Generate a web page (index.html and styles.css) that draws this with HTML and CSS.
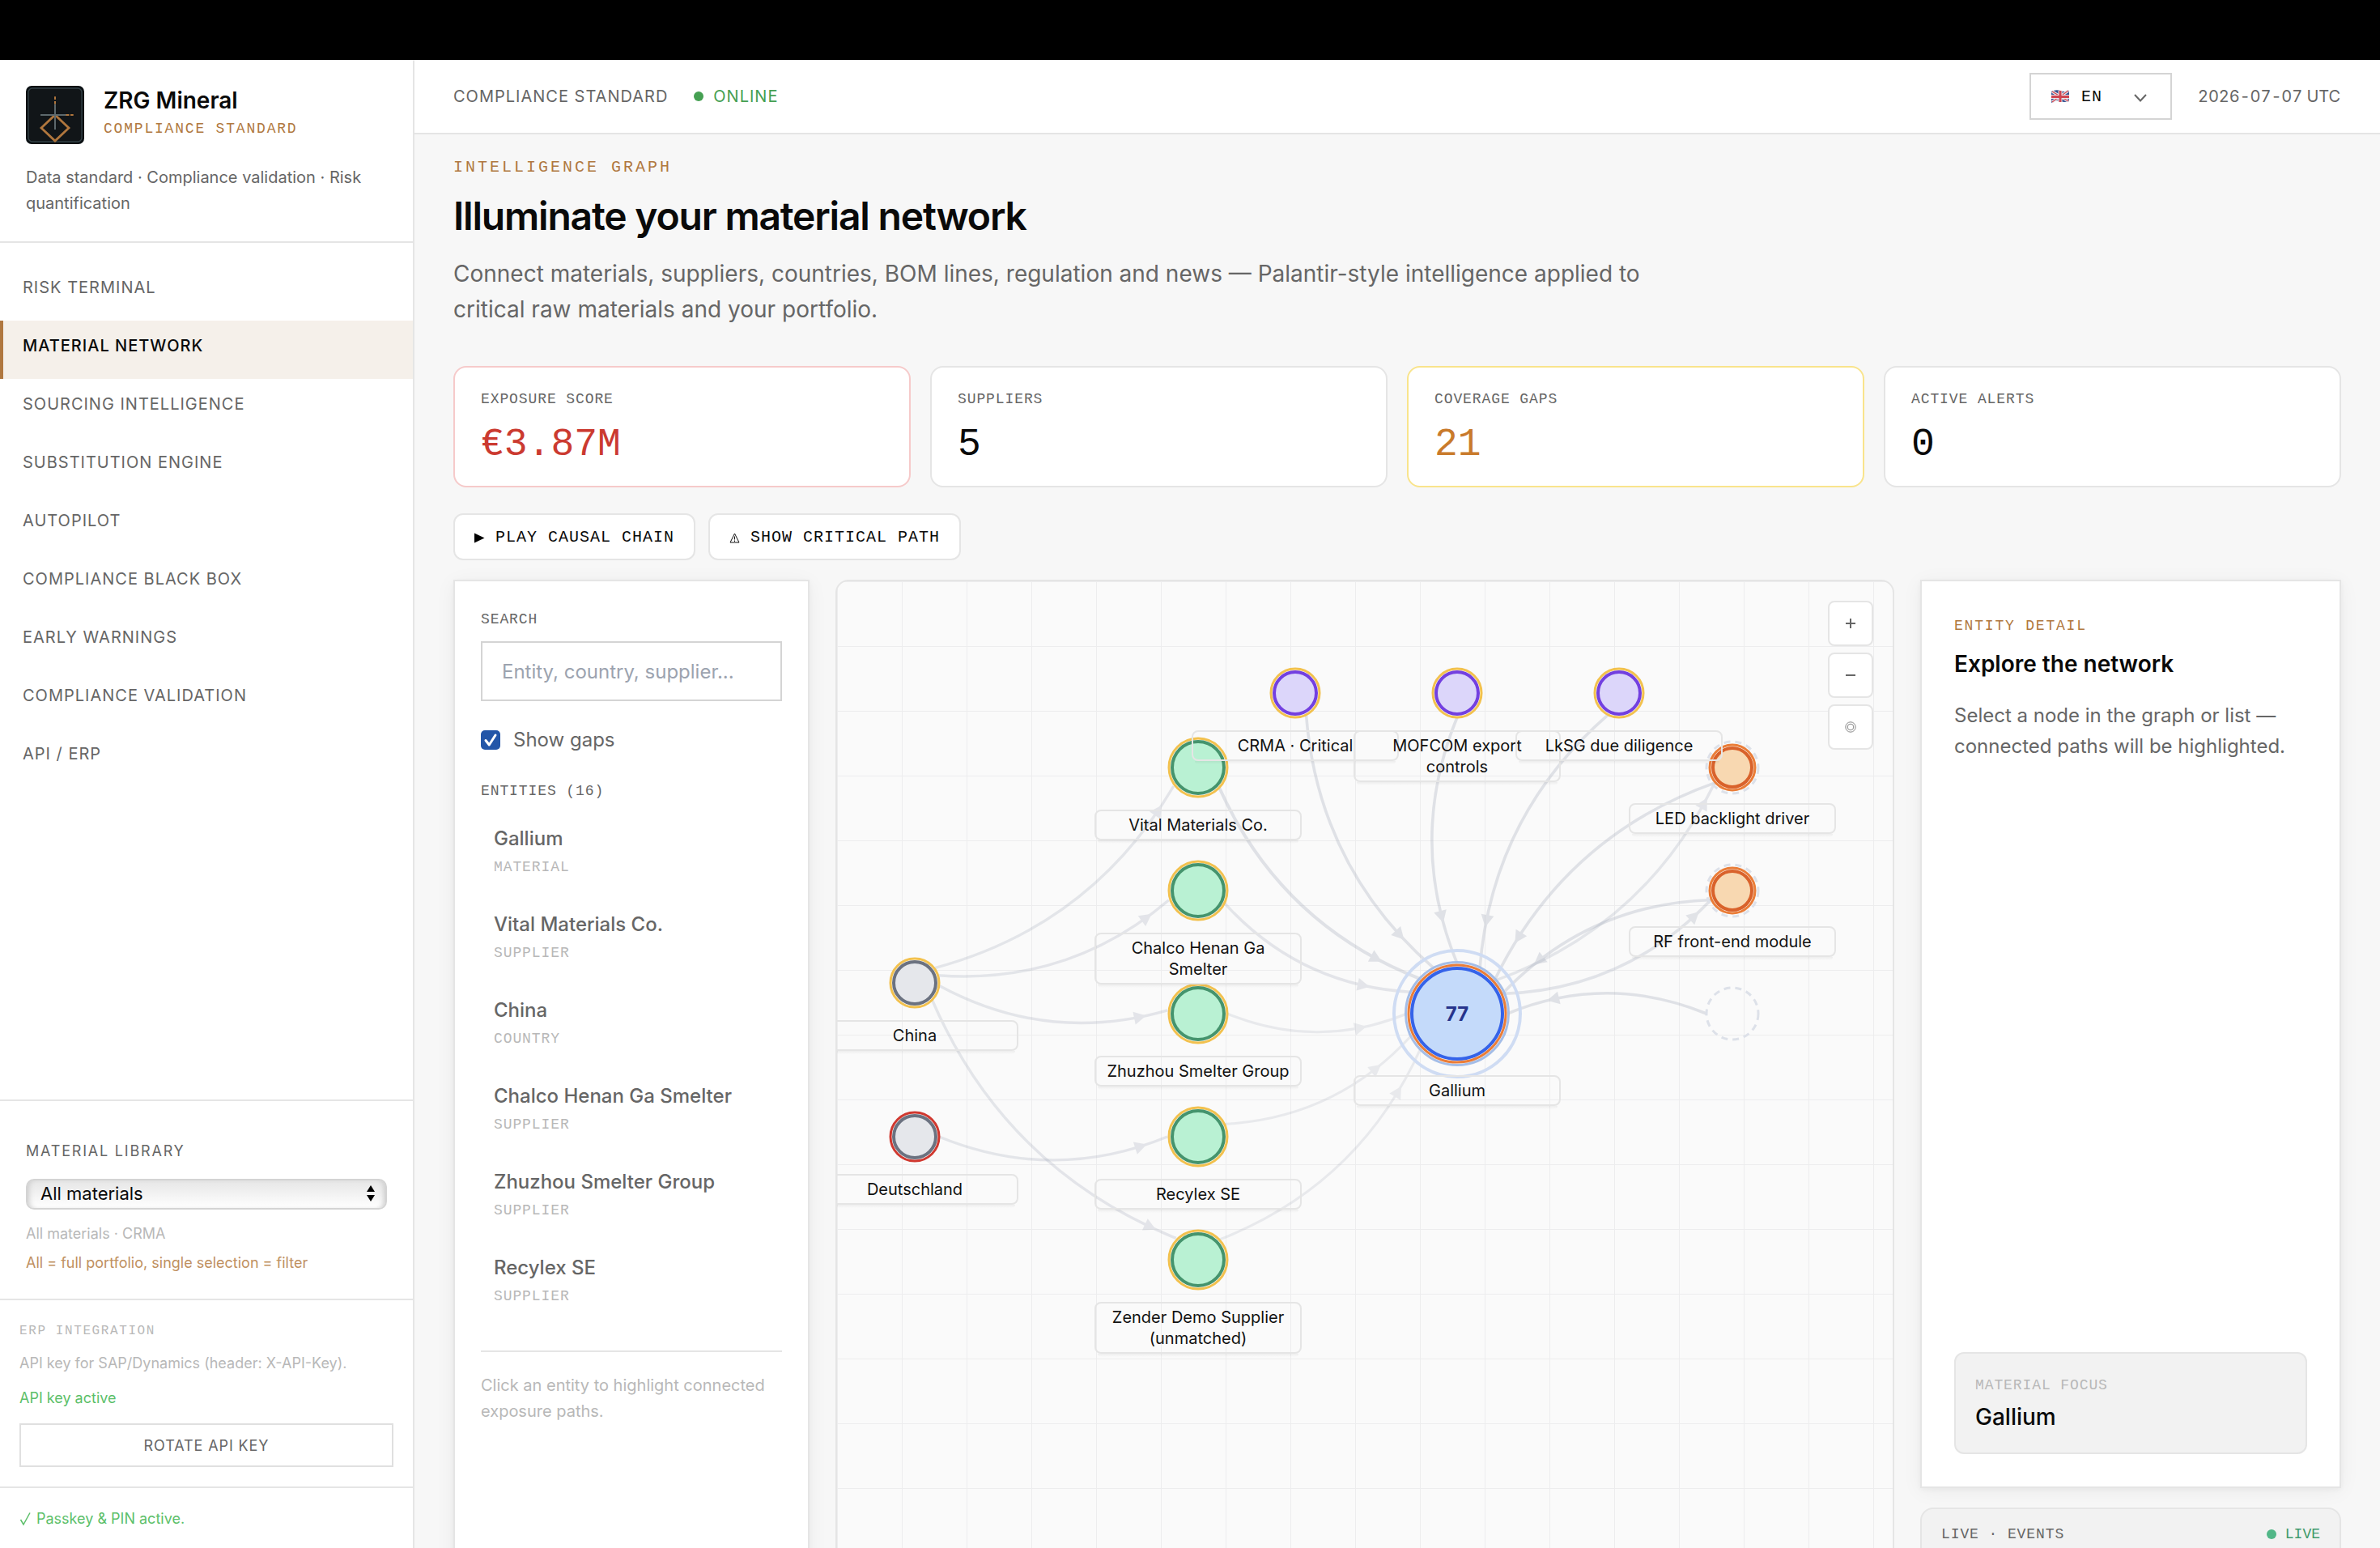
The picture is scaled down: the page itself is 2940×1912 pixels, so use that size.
FILE: index.html
```html
<!DOCTYPE html>
<html lang="en">

<head>
    <meta charset="UTF-8">
    <meta name="viewport" content="width=device-width, initial-scale=1.0">
    <title>ZRG Mineral</title>
    <link rel="stylesheet" href="styles.css">
</head>

<body>
    <div class="top_strip"></div>
    <div class="app">

        <!-- sidebar -->
        <aside class="sidebar">
            <div class="brand">
                <div class="brand_row">
                    <svg class="logo" viewBox="0 0 72 72">
                        <rect width="72" height="72" rx="7" fill="#0b1013" />
                        <rect x="3" y="3" width="66" height="66" rx="5" fill="#111518" stroke="#334045" stroke-width="1.4" />
                        <path d="M36 36L53 52L36 68L19 52Z" fill="none" stroke="#b0763d" stroke-width="2.8" />
                        <path d="M36 22.5V54M18 36H50" stroke="#5d686c" stroke-width="2" />
                        <path d="M36 13.3V17M36 19V22.5M49.5 36H53.5M55 36H58.7" stroke="#b0763d" stroke-width="2" />
                    </svg>
                    <div>
                        <div class="brand_name">ZRG Mineral</div>
                        <div class="brand_sub">COMPLIANCE STANDARD</div>
                    </div>
                </div>
                <p class="brand_text">Data standard · Compliance validation · Risk quantification</p>
            </div>

            <nav class="nav">
                <a>RISK TERMINAL</a>
                <a class="active">MATERIAL NETWORK</a>
                <a>SOURCING INTELLIGENCE</a>
                <a>SUBSTITUTION ENGINE</a>
                <a>AUTOPILOT</a>
                <a>COMPLIANCE BLACK BOX</a>
                <a>EARLY WARNINGS</a>
                <a>COMPLIANCE VALIDATION</a>
                <a>API / ERP</a>
            </nav>

            <div class="library">
                <div class="library_title">MATERIAL LIBRARY</div>
                <div class="library_select">
                    <span>All materials</span>
                    <svg width="10" height="20" viewBox="0 0 10 20"><path d="M5 0L10 8H0ZM5 20L0 12H10Z" /></svg>
                </div>
                <div class="small">All materials · CRMA</div>
                <div class="small hint">All = full portfolio, single selection = filter</div>
            </div>

            <div class="erp">
                <div class="erp_title">ERP INTEGRATION</div>
                <div class="small">API key for SAP/Dynamics (header: X-API-Key).</div>
                <div class="small ok">API key active</div>
                <div class="rotate">ROTATE API KEY</div>
            </div>

            <div class="passkey">
                <svg width="15" height="18" viewBox="0 0 15 18"><path d="M1.5 10L5 16L13 1.5" /></svg>
                <span class="small">Passkey &amp; PIN active.</span>
            </div>
        </aside>

        <main class="main">
            <header class="header">
                <span>COMPLIANCE STANDARD</span>
                <span class="online"><i></i>ONLINE</span>
                <div class="lang">
                    <svg class="flag" viewBox="0 0 22 16">
                        <path d="M0 2Q6 -1 11 1T22 1V14Q16 16 11 14T0 16Z" fill="#35518f" />
                        <path d="M1 2L21 14M21 1L1 15" stroke="#e9e6ea" stroke-width="3.4" />
                        <path d="M1 2L21 14M21 1L1 15" stroke="#cf4450" stroke-width="1.2" />
                        <path d="M11 1V15M0 8.5H22" stroke="#e9e6ea" stroke-width="5" />
                        <path d="M11 1V15M0 8.5H22" stroke="#cf4450" stroke-width="3" />
                    </svg>
                    <span>EN</span>
                    <svg class="chevron" viewBox="0 0 16 10"><path d="M1 1L8 8.5L15 1" /></svg>
                </div>
                <span class="date">2026-07-07 UTC</span>
            </header>

            <div class="content">
                <div class="eyebrow">INTELLIGENCE GRAPH</div>
                <h1>Illuminate your material network</h1>
                <p class="lead">Connect materials, suppliers, countries, BOM lines, regulation and news — Palantir-style intelligence applied to critical raw materials and your portfolio.</p>

                <div class="cards">
                    <div class="card card_red">
                        <div class="label">EXPOSURE SCORE</div>
                        <div class="value">€3.87M</div>
                    </div>
                    <div class="card">
                        <div class="label">SUPPLIERS</div>
                        <div class="value">5</div>
                    </div>
                    <div class="card card_yellow">
                        <div class="label">COVERAGE GAPS</div>
                        <div class="value">21</div>
                    </div>
                    <div class="card">
                        <div class="label">ACTIVE ALERTS</div>
                        <div class="value">0</div>
                    </div>
                </div>

                <div class="actions">
                    <div class="action">
                        <svg width="13" height="13" viewBox="0 0 13 13"><path d="M0 0.5L12.5 6.5L0 12.5Z" /></svg>
                        <span>PLAY CAUSAL CHAIN</span>
                    </div>
                    <div class="action">
                        <svg width="13" height="13" viewBox="0 0 13 13"><path d="M6.5 1L12 12H1ZM6.5 4.5V8.5M6.5 9.5V11" fill="none" stroke="#111" /></svg>
                        <span>SHOW CRITICAL PATH</span>
                    </div>
                </div>

                <div class="workspace">
                    <!-- entity list -->
                    <section class="panel search_panel">
                        <div class="label">SEARCH</div>
                        <div class="search_input">Entity, country, supplier...</div>
                        <div class="check_row">
                            <svg width="24" height="24" viewBox="0 0 24 24">
                                <rect width="24" height="24" rx="5" fill="#2356a8" />
                                <path d="M6 12.5L10.3 18L18 6" fill="none" stroke="#fff" stroke-width="3" stroke-linecap="round" stroke-linejoin="round" />
                            </svg>
                            <span>Show gaps</span>
                        </div>
                        <div class="label">ENTITIES (16)</div>
                        <ul class="entities">
                            <li><b>Gallium</b><span>MATERIAL</span></li>
                            <li><b>Vital Materials Co.</b><span>SUPPLIER</span></li>
                            <li><b>China</b><span>COUNTRY</span></li>
                            <li><b>Chalco Henan Ga Smelter</b><span>SUPPLIER</span></li>
                            <li><b>Zhuzhou Smelter Group</b><span>SUPPLIER</span></li>
                            <li><b>Recylex SE</b><span>SUPPLIER</span></li>
                        </ul>
                        <p class="panel_note">Click an entity to highlight connected exposure paths.</p>
                    </section>

                    <!-- graph, filled in by graph.js -->
                    <section class="graph">
                        <svg class="graph_svg" id="graph_svg" width="1304" height="1240"></svg>
                        <div id="graph_labels"></div>
                        <div class="zoom_tools">
                            <div><svg width="14" height="14" viewBox="0 0 14 14"><path d="M1 7H13M7 1V13" /></svg></div>
                            <div><svg width="14" height="14" viewBox="0 0 14 14"><path d="M1 7H13" /></svg></div>
                            <div class="reset"><svg width="14" height="14" viewBox="0 0 14 14"><circle cx="7" cy="7" r="6.2" /><circle cx="7" cy="7" r="3.8" /></svg></div>
                        </div>
                    </section>

                    <!-- detail -->
                    <div class="side">
                        <section class="panel detail">
                            <div class="detail_eyebrow">ENTITY DETAIL</div>
                            <h3>Explore the network</h3>
                            <p>Select a node in the graph or list — connected paths will be highlighted.</p>
                            <div class="focus">
                                <div class="label">MATERIAL FOCUS</div>
                                <div class="focus_name">Gallium</div>
                            </div>
                        </section>
                        <section class="live">
                            <span class="label">LIVE · EVENTS</span>
                            <span class="live_state"><i></i>LIVE</span>
                        </section>
                    </div>
                </div>
            </div>
        </main>
    </div>

    <script src="graph.js"></script>
</body>

</html>
```
FILE: styles.css
```css
* {
    margin: 0;
    padding: 0;
    box-sizing: border-box;
}

body {
    height: 1912px;
    overflow: hidden;
    font-family: Inter, "Liberation Sans", sans-serif;
    color: #0a0a0a;
    background-color: #f7f7f7;
}

.top_strip {
    height: 74px;
    background-color: #000;
}

.app {
    display: flex;
    height: 1838px;
    overflow: hidden;
}

/* sidebar */
.sidebar {
    display: flex;
    flex-direction: column;
    flex: none;
    width: 512px;
    background-color: #fff;
    border-right: 2px solid #e5e5e5;
}

.brand {
    height: 226px;
    padding: 32px 32px 0;
    border-bottom: 2px solid #e5e5e5;
}

.brand_row {
    display: flex;
    gap: 24px;
    height: 72px;
}

.logo {
    width: 72px;
    height: 72px;
}

.brand_name {
    font-size: 28px;
    font-weight: 600;
    line-height: 36px;
}

.brand_sub {
    margin-top: 3px;
    font-family: "Liberation Mono", monospace;
    font-size: 18px;
    line-height: 28px;
    letter-spacing: 1.8px;
    color: #b07840;
}

.brand_text {
    margin-top: 25px;
    font-size: 20px;
    line-height: 32px;
    color: #666;
}

.nav {
    flex: 1;
    padding-top: 24px;
}

.nav a {
    display: block;
    height: 72px;
    padding-left: 28px;
    font-size: 20px;
    line-height: 62px;
    letter-spacing: 1px;
    color: #666;
}

.nav .active {
    padding-left: 24px;
    font-weight: 500;
    color: #0a0a0a;
    background-color: #f5f0ea;
    border-left: 4px solid #b07840;
}

.library {
    height: 246px;
    padding: 48px 32px 0;
    border-top: 2px solid #e5e5e5;
}

.library_title {
    font-size: 18px;
    line-height: 28px;
    letter-spacing: 1.8px;
    color: #666;
}

.library_select {
    display: flex;
    align-items: center;
    justify-content: space-between;
    height: 38px;
    margin: 20px 0 16px;
    padding: 0 13px 2px 16px;
    font-size: 22px;
    border: 2px solid #d4d4d4;
    border-radius: 10px;
    background: linear-gradient(#e6e6e6, #fff);
    box-shadow: inset 6px 0 6px -4px #ccc, inset -6px 0 6px -4px #ccc;
}

.small {
    font-size: 18px;
    line-height: 28px;
    color: #b8b8b8;
}

.hint {
    margin-top: 8px;
    color: #c0905f;
}

.erp {
    height: 232px;
    padding: 26px 24px 0;
    border-top: 2px solid #e5e5e5;
}

.erp_title {
    margin-bottom: 14px;
    font-family: "Liberation Mono", monospace;
    font-size: 16px;
    line-height: 24px;
    letter-spacing: 1.6px;
    color: #b8b8b8;
}

.small.ok {
    margin-top: 15px;
    color: #5cbf6a;
}

.rotate {
    height: 54px;
    margin-top: 17px;
    font-size: 18px;
    line-height: 52px;
    letter-spacing: 0.9px;
    text-align: center;
    color: #666;
    border: 2px solid #e0e0e0;
}

.passkey {
    display: flex;
    align-items: center;
    gap: 6px;
    height: 76px;
    padding: 2px 24px 0;
    border-top: 2px solid #e5e5e5;
}

.passkey .small {
    color: #5cbf6a;
}

.passkey path {
    fill: none;
    stroke: #5cbf6a;
    stroke-width: 1.5;
}

/* header */
.main {
    flex: 1;
    min-width: 0;
}

.header {
    display: flex;
    align-items: center;
    height: 92px;
    padding: 0 48px;
    font-size: 20px;
    letter-spacing: 1px;
    color: #666;
    background-color: #fff;
    border-bottom: 2px solid #e5e5e5;
}

.online {
    display: flex;
    align-items: center;
    gap: 12px;
    margin-left: 32px;
    color: #45a052;
}

.online i {
    width: 12px;
    height: 12px;
    border-radius: 50%;
    background-color: #45a052;
}

.lang {
    display: flex;
    align-items: center;
    width: 176px;
    height: 58px;
    margin-left: auto;
    padding-left: 25px;
    font-family: "Liberation Mono", monospace;
    color: #0a0a0a;
    border: 2px solid #d4d4d4;
}

.flag {
    width: 22px;
    height: 16px;
    margin-right: 15px;
}

.chevron {
    width: 16px;
    height: 10px;
    margin: 3px 0 0 39px;
}

.chevron path {
    fill: none;
    stroke: #666;
    stroke-width: 2;
}

.date {
    flex: none;
    width: 177px;
    margin-left: 32px;
    font-variant-numeric: tabular-nums;
    letter-spacing: -0.05px;
    white-space: nowrap;
}

/* content */
.content {
    padding: 26px 48px 0;
}

.eyebrow {
    font-family: "Liberation Mono", monospace;
    font-size: 20px;
    line-height: 30px;
    letter-spacing: 3px;
    color: #b07840;
}

h1 {
    margin-top: 15px;
    font-size: 48px;
    font-weight: 600;
    line-height: 60px;
    letter-spacing: -1.2px;
}

.lead {
    width: 1536px;
    margin-top: 19px;
    font-size: 28px;
    line-height: 44px;
    color: #666;
}

.cards {
    display: grid;
    grid-template-columns: repeat(4, 1fr);
    gap: 24px;
    margin-top: 48px;
}

.card {
    height: 150px;
    padding: 25px 32px;
    background-color: #fff;
    border: 2px solid #e5e5e5;
    border-radius: 16px;
}

.label {
    font-family: "Liberation Mono", monospace;
    font-size: 18px;
    line-height: 28px;
    letter-spacing: 0.9px;
    color: #666;
}

.value {
    margin-top: 12px;
    font-family: "Liberation Mono", monospace;
    font-size: 48px;
    line-height: 60px;
}

.card_red {
    border-color: #f6caca;
}

.card_red .value {
    color: #cb3a30;
}

.card_yellow {
    border-color: #f9e48c;
}

.card_yellow .value {
    color: #c97a2b;
}

.actions {
    display: flex;
    gap: 16px;
    margin-top: 32px;
}

.action {
    display: flex;
    align-items: center;
    gap: 13px;
    height: 58px;
    padding: 0 24px;
    font-family: "Liberation Mono", monospace;
    font-size: 20px;
    letter-spacing: 1px;
    background-color: #fff;
    border: 2px solid #e5e5e5;
    border-radius: 12px;
}

.action svg {
    margin-top: 3px;
}

.workspace {
    display: grid;
    grid-template-columns: 440px 1fr 520px;
    gap: 32px;
    height: 1240px;
    margin-top: 24px;
}

.panel {
    background-color: #fff;
    border: 2px solid #e5e5e5;
    box-shadow: 0 4px 24px rgba(0, 0, 0, 0.05), 0 2px 6px rgba(0, 0, 0, 0.04);
}

/* search */
.search_panel {
    padding: 33px 32px 0;
}

.search_input {
    height: 74px;
    margin-top: 13px;
    padding: 0 24px;
    font-size: 24px;
    line-height: 72px;
    white-space: nowrap;
    color: #9ca3af;
    border: 2px solid #d4d4d4;
}

.check_row {
    display: flex;
    align-items: center;
    gap: 16px;
    height: 36px;
    margin: 30px 0 31px;
    font-size: 24px;
    line-height: 35px;
    color: #666;
}

.check_row span {
    height: 36px;
}

.entities {
    margin-top: 14px;
    list-style: none;
}

.entities li {
    height: 106px;
    padding: 12px 16px 0;
}

.entities b {
    display: block;
    font-size: 24px;
    font-weight: 500;
    line-height: 38px;
    color: #666;
}

.entities span {
    display: block;
    margin-top: 2px;
    font-family: "Liberation Mono", monospace;
    font-size: 18px;
    line-height: 28px;
    letter-spacing: 0.9px;
    color: #b8b8b8;
}

.panel_note {
    margin-top: 27px;
    padding-top: 25px;
    font-size: 20px;
    line-height: 32px;
    color: #b8b8b8;
    border-top: 2px solid #e5e5e5;
}

/* graph */
.graph {
    position: relative;
    overflow: hidden;
    border: 2px solid #e5e5e5;
    border-radius: 16px;
    background-color: #fafafa;
    background-image: linear-gradient(#ededee 1px, transparent 1px), linear-gradient(90deg, #ededee 1px, transparent 1px);
    background-size: 80px 80px;
}

.graph_svg {
    display: block;
}

.graph_svg path {
    fill: none;
    stroke: #9ca3b4;
}

.graph_svg polygon {
    fill: #9ca3b4;
}

.graph_svg circle {
    fill: none;
}

.graph_svg .core {
    stroke-width: 4;
}

.graph_svg .supplier { fill: #b9f1d3; stroke: #45946d; }
.graph_svg .country { fill: #e5e7eb; stroke: #6b7280; }
.graph_svg .regulation { fill: #dcd6fa; stroke: #7340e0; }
.graph_svg .bom { fill: #f8d8b1; stroke: #d9622b; }
.graph_svg .material { fill: #c4dafa; stroke: #3563e9; }
.graph_svg .ring { stroke-width: 3; }
.graph_svg .gold { stroke: #f2c14e; }
.graph_svg .red { stroke: #d0382f; }
.graph_svg .orange { stroke: #ea7d38; }
.graph_svg .dashed { stroke: #dde1e9; stroke-width: 3; stroke-dasharray: 8 6; }
.graph_svg .halo_in { stroke: #a4bde7; stroke-width: 3; }
.graph_svg .halo_out { stroke: #cfdcf3; stroke-width: 4; }

.graph_svg text {
    font-size: 24px;
    font-weight: 700;
    text-anchor: middle;
    fill: #27348b;
}

.node_label {
    position: absolute;
    width: 256px;
    padding: 4px 10px;
    font-size: 20px;
    line-height: 26px;
    text-align: center;
    color: #111;
    border: 2px solid #e5e5e5;
    border-radius: 8px;
    transform: translateX(-50%);
}

/* shadow only under the box, its inside stays clear */
.node_label::after {
    content: "";
    position: absolute;
    left: 2px;
    right: 2px;
    bottom: -6px;
    height: 4px;
    border-radius: 0 0 6px 6px;
    background: linear-gradient(rgba(0, 0, 0, 0.05), transparent);
}

.zoom_tools {
    position: absolute;
    top: 24px;
    right: 24px;
    display: grid;
    gap: 8px;
}

.zoom_tools div {
    display: flex;
    align-items: center;
    justify-content: center;
    width: 56px;
    height: 56px;
    background-color: #fff;
    border: 2px solid #e5e5e5;
    border-radius: 8px;
}

.zoom_tools path {
    stroke: #666;
    stroke-width: 2;
}

.zoom_tools circle {
    fill: none;
    stroke: #888;
    stroke-width: 1;
}

/* detail */
.detail {
    display: flex;
    flex-direction: column;
    height: 1122px;
    padding: 41px 40px 40px;
}

.detail_eyebrow {
    font-family: "Liberation Mono", monospace;
    font-size: 18px;
    line-height: 28px;
    letter-spacing: 1.8px;
    color: #b07840;
}

.detail h3 {
    margin-top: 13px;
    font-size: 28px;
    font-weight: 600;
    line-height: 40px;
}

.detail p {
    margin-top: 25px;
    font-size: 24px;
    line-height: 38px;
    color: #666;
}

.focus {
    height: 126px;
    margin-top: auto;
    padding: 25px 24px 0;
    background-color: #f2f2f2;
    border: 2px solid #e5e5e5;
    border-radius: 12px;
}

.focus .label {
    color: #b8b8b8;
}

.focus_name {
    margin-top: 5px;
    font-size: 28px;
    font-weight: 500;
    line-height: 40px;
}

.live {
    display: flex;
    justify-content: space-between;
    height: 200px;
    margin-top: 24px;
    padding: 17px 24px 0;
    background-color: #f2f2f2;
    border: 2px solid #e5e5e5;
    border-radius: 16px;
}

.live_state {
    display: flex;
    align-items: center;
    gap: 11px;
    height: 28px;
    font-family: "Liberation Mono", monospace;
    font-size: 18px;
    color: #3f9a6c;
}

.live_state i {
    width: 12px;
    height: 12px;
    border-radius: 50%;
    background-color: #52b788;
}
```
FILE: graph.js
```js
//nodes: position, radius, type, ring colour, label
var nodes = {
    crma: { x: 566, y: 138, r: 26, type: "regulation", ring: "gold", label: "CRMA · Critical" },
    mofcom: { x: 766, y: 138, r: 26, type: "regulation", ring: "gold", label: "MOFCOM export<br>controls" },
    lksg: { x: 966, y: 138, r: 26, type: "regulation", ring: "gold", label: "LkSG due diligence" },
    vital: { x: 446, y: 230, r: 32, type: "supplier", ring: "gold", label: "Vital Materials Co." },
    chalco: { x: 446, y: 382, r: 32, type: "supplier", ring: "gold", label: "Chalco Henan Ga<br>Smelter" },
    zhuzhou: { x: 446, y: 534, r: 32, type: "supplier", ring: "gold", label: "Zhuzhou Smelter Group" },
    recylex: { x: 446, y: 686, r: 32, type: "supplier", ring: "gold", label: "Recylex SE" },
    zender: { x: 446, y: 838, r: 32, type: "supplier", ring: "gold", label: "Zender Demo Supplier<br>(unmatched)" },
    china: { x: 96, y: 496, r: 26, type: "country", ring: "gold", label: "China" },
    germany: { x: 96, y: 686, r: 26, type: "country", ring: "red", label: "Deutschland" },
    gallium: { x: 766, y: 534, r: 56, type: "material", ring: "orange", label: "Gallium" },
    led: { x: 1106, y: 230, r: 24, type: "bom", ring: "orange", label: "LED backlight driver", gap: true },
    rf: { x: 1106, y: 382, r: 24, type: "bom", ring: "orange", label: "RF front-end module", gap: true },
    ghost: { x: 1106, y: 534, r: 28, gap: true }
};

//from, to, width, opacity
var edges = [
    ["china", "vital", 3.4, 0.24],
    ["china", "chalco", 3.4, 0.24],
    ["china", "zhuzhou", 3.4, 0.24],
    ["china", "zender", 3.4, 0.24],
    ["germany", "recylex", 3.4, 0.24],
    ["vital", "gallium", 4, 0.28],
    ["chalco", "gallium", 3.4, 0.24],
    ["zhuzhou", "gallium", 3, 0.19],
    ["recylex", "gallium", 3, 0.19],
    ["zender", "gallium", 3, 0.19],
    ["crma", "gallium", 3.6, 0.28],
    ["mofcom", "gallium", 3.6, 0.28],
    ["lksg", "gallium", 3.6, 0.28],
    ["led", "gallium", 3.6, 0.28],
    ["rf", "gallium", 3.6, 0.28],
    ["ghost", "gallium", 3.6, 0.28],
    ["gallium", "led", 3.4, 0.24],
    ["gallium", "rf", 3.6, 0.26]
];

var svg = document.getElementById("graph_svg");
var labels = document.getElementById("graph_labels");
var html = "";

//point on the quadratic curve
function at(a, c, b, t) {
    var u = 1 - t;
    return {
        x: u * u * a.x + 2 * u * t * c.x + t * t * b.x,
        y: u * u * a.y + 2 * u * t * c.y + t * t * b.y
    };
}

for (var i = 0; i < edges.length; i++) {
    var s = nodes[edges[i][0]];
    var e = nodes[edges[i][1]];
    var len = Math.hypot(e.x - s.x, e.y - s.y);
    var ux = (e.x - s.x) / len;
    var uy = (e.y - s.y) / len;
    var a = { x: s.x + ux * (s.r + 4), y: s.y + uy * (s.r + 4) };
    var b = { x: e.x - ux * (e.r + 6), y: e.y - uy * (e.r + 6) };
    var bend = Math.hypot(b.x - a.x, b.y - a.y) * 0.205;
    var c = { x: (a.x + b.x) / 2 - uy * bend, y: (a.y + b.y) / 2 + ux * bend };

    html += '<g opacity="' + edges[i][3] + '"><path stroke-width="' + edges[i][2] + '" d="M' + a.x + ' ' + a.y +
        'Q' + c.x + ' ' + c.y + ' ' + b.x + ' ' + b.y + '"/>';

    //arrow sits before the end of the line
    var t = 1;
    var tip = b;
    while (t > 0 && Math.hypot(tip.x - e.x, tip.y - e.y) < e.r * 2) {
        t -= 0.005;
        tip = at(a, c, b, t);
    }
    var back = at(a, c, b, t - 0.03);
    var angle = Math.atan2(tip.y - back.y, tip.x - back.x) * 180 / Math.PI;
    html += '<polygon points="0,0 -15,-8 -15,8" transform="translate(' + tip.x + ' ' + tip.y + ') rotate(' + angle + ')"/></g>';
}

for (var key in nodes) {
    var n = nodes[key];
    var pos = ' cx="' + n.x + '" cy="' + n.y + '"';
    if (n.gap) {
        html += '<circle class="dashed"' + pos + ' r="32"/>';
    }
    if (!n.type) {
        continue;
    }
    if (n.type == "material") {
        html += '<circle class="halo_out"' + pos + ' r="78"/><circle class="halo_in"' + pos + ' r="63.5"/>';
    }
    html += '<circle class="ring ' + n.ring + '"' + pos + ' r="' + (n.r + 4) + '"/>';
    html += '<circle class="core ' + n.type + '"' + pos + ' r="' + n.r + '"/>';
    if (n.type == "material") {
        html += '<text x="' + n.x + '" y="' + (n.y + 9) + '">77</text>';
    }

    var div = document.createElement("div");
    div.className = "node_label";
    div.innerHTML = n.label;
    div.style.left = n.x + "px";
    div.style.top = (n.y + n.r + 20) + "px";
    labels.appendChild(div);
}
svg.innerHTML = html;
```
